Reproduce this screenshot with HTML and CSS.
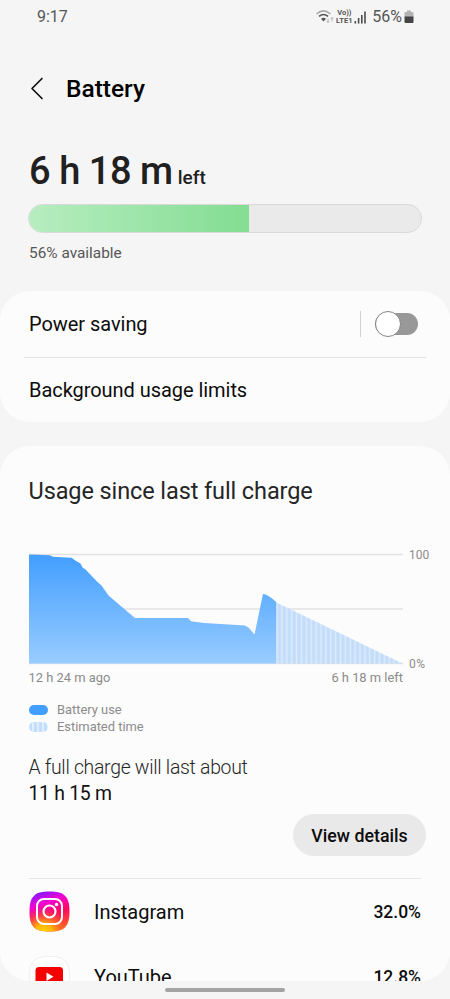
FILE: index.html
```html
<!DOCTYPE html>
<html lang="en">
<head>
    <meta charset="UTF-8">
    <meta name="viewport" content="width=device-width, initial-scale=1.0">
    <title>Battery</title>
    <link rel="stylesheet" href="styles.css">
</head>
<body>
    <div class="status-bar">
        <span class="clock">9:17</span>
        <div class="status-icons">
            <svg class="wifi" width="18" height="16" viewBox="0 0 18 16" fill="none">
                <path d="M0.500 5Q7.500 -1.200 14.500 5" stroke="#aaa" stroke-width="1.500"/>
                <path d="M3 7.400Q7.500 3.500 12 7.400" stroke="#555" stroke-width="1.500"/>
                <path d="M5 9.700Q7.500 7.600 10 9.700L7.500 12.500Z" fill="#555"/>
                <path d="M12 9.500v4M10.700 12.200l1.300 1.300 1.300-1.300M16 12.500V8.500M14.700 9.800l1.300-1.300 1.300 1.300" stroke="#aaa" stroke-width="0.900"/>
            </svg>
            <div class="volte"><span>Vo))</span><span>LTE1</span></div>
            <svg class="signal" width="13" height="13" viewBox="0 0 13 13" fill="#4c4c4c">
                <rect x="0.500" y="10" width="1.600" height="2.500"/>
                <rect x="3.800" y="7" width="1.600" height="5.500"/>
                <rect x="7" y="4" width="1.600" height="8.500"/>
                <rect x="10.200" y="0.500" width="1.600" height="12"/>
            </svg>
            <span class="level">56%</span>
            <svg width="10" height="14" viewBox="0 0 10 14">
                <path d="M3 0.500h4v1.500h1.500q1 0 1 1V7h-9V3q0-1 1-1H3Z" fill="#b4b4b4"/>
                <path d="M0.500 6.500h9V12q0 1-1 1h-7q-1 0-1-1Z" fill="#454545"/>
            </svg>
        </div>
    </div>

    <header class="header">
        <svg width="16" height="24" viewBox="0 0 16 24" fill="none" stroke="#111" stroke-width="1.700" stroke-linecap="round" stroke-linejoin="round">
            <path d="M13 1.500L3 11.500L13 21.500"/>
        </svg>
        <h1>Battery</h1>
    </header>

    <section class="summary">
        <div class="time-left"><strong>6 h 18 m</strong><span>left</span></div>
        <div class="meter"><div class="meter-fill" style="width: 56%"></div></div>
        <p class="available">56% available</p>
    </section>

    <section class="card settings">
        <div class="setting">
            <span class="power">Power saving</span>
            <div class="switch-wrap">
                <div class="switch"><div class="knob"></div></div>
            </div>
        </div>
        <div class="setting">
            <span class="limits">Background usage limits</span>
        </div>
    </section>

    <section class="card usage">
        <h2>Usage since last full charge</h2>
        <div class="chart">
            <svg width="375" height="112" viewBox="0 0 375 112">
                <defs>
                    <linearGradient id="use" x1="0" y1="1" x2="0" y2="110" gradientUnits="userSpaceOnUse">
                        <stop offset="0" stop-color="#429eff"/>
                        <stop offset="1" stop-color="#99ccff"/>
                    </linearGradient>
                    <pattern id="stripes" x="247.500" y="0" width="4.880" height="112" patternUnits="userSpaceOnUse">
                        <rect width="4.880" height="112" fill="#dcebfc"/>
                        <rect x="1.400" width="3.200" height="112" fill="#c2dcfa"/>
                    </pattern>
                </defs>
                <path d="M0 1.500H374M0 56H374M0 110.500H374" stroke="#e1e1e1" stroke-width="1.300"/>
                <path d="M0 1.500L21 2.300L24 3.700L42.500 4.700L47 8L51.500 10.500L53.500 14.500L56.500 16.500L68.500 29L72.500 32.500L79.500 42.500L96.500 57L106 65H159L162 68.300L175 70L216 72.500L220 75L225.500 81.500L234 41Q239 41 247.500 49.500V110.500H0Z" fill="url(#use)"/>
                <path d="M247.500 49.500L373.500 110.500H247.500Z" fill="url(#stripes)"/>
            </svg>
            <div class="y-labels"><span>100</span><span class="zero">0%</span></div>
        </div>
        <div class="x-labels"><span>12 h 24 m ago</span><span>6 h 18 m left</span></div>
        <div class="legend">
            <div class="legend-row"><i class="swatch"></i><span>Battery use</span></div>
            <div class="legend-row"><i class="swatch striped"></i><span>Estimated time</span></div>
        </div>
        <p class="forecast">A full charge will last about<strong>11 h 15 m</strong></p>
        <button class="details">View details</button>

        <div class="apps">
            <div class="app">
                <svg width="42" height="42" viewBox="0 0 42 42">
                    <defs>
                        <linearGradient id="igBase" x1="0.200" y1="0" x2="0.550" y2="1">
                            <stop offset="0" stop-color="#7a18ff"/>
                            <stop offset="0.300" stop-color="#ee06d5"/>
                            <stop offset="0.600" stop-color="#ff0864"/>
                            <stop offset="1" stop-color="#ff5b20"/>
                        </linearGradient>
                        <radialGradient id="igGlow" cx="0.350" cy="1.050" r="0.650">
                            <stop offset="0" stop-color="#ffda00"/>
                            <stop offset="0.350" stop-color="#ffb60c"/>
                            <stop offset="1" stop-color="#ff4b32" stop-opacity="0"/>
                        </radialGradient>
                    </defs>
                    <path d="M20.500 0.500C35.500 0.500 40.500 5.500 40.500 20.500S35.500 40.500 20.500 40.500S0.500 35.500 0.500 20.500S5.500 0.500 20.500 0.500Z" fill="url(#igBase)"/>
                    <path d="M20.500 0.500C35.500 0.500 40.500 5.500 40.500 20.500S35.500 40.500 20.500 40.500S0.500 35.500 0.500 20.500S5.500 0.500 20.500 0.500Z" fill="url(#igGlow)"/>
                    <rect x="8" y="8" width="25" height="25" rx="7" fill="none" stroke="#fff" stroke-width="2"/>
                    <circle cx="20.500" cy="20.500" r="6" fill="none" stroke="#fff" stroke-width="2.200"/>
                    <circle cx="27.500" cy="13.500" r="1.700" fill="#fff"/>
                </svg>
                <span class="name">Instagram</span>
                <span class="percent">32.0%</span>
            </div>
            <div class="app">
                <svg width="42" height="42" viewBox="0 0 42 42">
                    <path d="M20.500 0.500C35.500 0.500 40.500 5.500 40.500 20.500S35.500 40.500 20.500 40.500S0.500 35.500 0.500 20.500S5.500 0.500 20.500 0.500Z" fill="#fff" stroke="#eee"/>
                    <rect x="6.500" y="11" width="27.500" height="19.500" rx="3.500" fill="#f50000"/>
                    <path d="M17.500 16.500L24.500 20.700L17.500 24.900Z" fill="#fff"/>
                </svg>
                <span class="name">YouTube</span>
                <span class="percent">12.8%</span>
            </div>
        </div>
    </section>
    <div class="nav-handle"></div>
</body>
</html>
```
FILE: styles.css
```css
* {
    box-sizing: border-box;
}
body {
    margin: 0;
    height: 999px;
    overflow: hidden;
    background-color: #f5f5f5;
    color: #0c0c0c;
    font-family: Roboto, sans-serif;
}
h1, h2, p {
    margin: 0;
    font-weight: 400;
}
svg {
    display: block;
    flex-shrink: 0;
}
.status-bar {
    display: flex;
    justify-content: space-between;
    height: 34px;
    padding: 0 36px 0 37px;
    line-height: 34px;
    font-size: 16px;
    color: #555;
}
.status-icons {
    display: flex;
    align-items: center;
}
.wifi {
    margin-right: 1px;
}
.volte {
    display: flex;
    flex-direction: column;
    align-items: center;
    width: 18px;
    margin-right: 1px;
    font-size: 7.5px;
    font-weight: 700;
    line-height: 8px;
}
.signal {
    margin-right: 5px;
}
.level {
    margin-right: 2px;
}
.header {
    display: flex;
    align-items: center;
    height: 110px;
    padding-left: 29px;
}
.header h1 {
    margin-left: 21px;
    padding-bottom: 2px;
    font-size: 24.5px;
    font-weight: 500;
    color: #000;
}
.summary {
    height: 147px;
    padding: 0 28px;
}
.time-left {
    display: flex;
    align-items: baseline;
    height: 60px;
    padding-left: 1px;
    line-height: 54px;
    color: #202020;
}
.time-left strong {
    font-size: 38px;
    font-weight: 500;
    letter-spacing: -0.45px;
}
.time-left span {
    margin-left: 5px;
    font-size: 19px;
    font-weight: 500;
}
.meter {
    height: 29px;
    border: 1px solid #d9d9d9;
    border-radius: 15px;
    background-color: #eaeaea;
    overflow: hidden;
}
.meter-fill {
    height: 100%;
    background: linear-gradient(to right, #b7edc0, #83dd92);
}
.available {
    margin: 10px 0 0 1px;
    font-size: 15.4px;
    line-height: 20px;
    color: #555;
}
.card {
    border-radius: 30px;
    background-color: #fcfcfc;
}
.settings {
    height: 131px;
    padding: 0 24px;
}
.setting {
    display: flex;
    justify-content: space-between;
    align-items: center;
    height: 64px;
    padding: 0 8px 0 5px;
    font-size: 20px;
    letter-spacing: -0.05px;
}
.setting:first-child {
    height: 67px;
    border-bottom: 1px solid #e2e2e2;
}
.switch-wrap {
    display: flex;
    align-items: center;
    height: 26px;
    padding-left: 14px;
    border-left: 1px solid #d0d0d0;
}
.switch {
    display: flex;
    align-items: center;
    width: 43px;
    height: 22px;
    border-radius: 11px;
    background-color: #989898;
}
.knob {
    flex-shrink: 0;
    width: 26px;
    height: 26px;
    border: 1px solid #858585;
    border-radius: 50%;
    background-color: #fff;
}
.usage {
    height: 535px;
    margin-top: 24px;
    padding: 30px 24px 0 28.5px;
    overflow: hidden;
}
.usage h2 {
    height: 77px;
    font-size: 23.5px;
    letter-spacing: -0.1px;
    line-height: 30px;
    color: #252525;
}
.chart {
    display: flex;
    height: 112px;
}
.y-labels {
    display: flex;
    flex-direction: column;
    justify-content: space-between;
    margin: -5px 0 -6px 5.5px;
    font-size: 12px;
    line-height: 14px;
    color: #8b8b8b;
}
.zero {
    letter-spacing: 0.6px;
}
.x-labels {
    display: flex;
    justify-content: space-between;
    width: 374.5px;
    margin-top: 5px;
    font-size: 12.9px;
    line-height: 16px;
    color: #8b8b8b;
}
.legend {
    margin-top: 15px;
    font-size: 12.9px;
    line-height: 18px;
    color: #8b8b8b;
}
.legend-row {
    display: flex;
    align-items: center;
    height: 17.5px;
}
.swatch {
    width: 19px;
    height: 10px;
    margin-right: 9.5px;
    border-radius: 5px;
    background-color: #429eff;
}
.swatch.striped {
    background: repeating-linear-gradient(to right, #c2defc 0 3px, #e0eefc 3px 5px);
}
.forecast {
    margin-top: 19px;
    font-size: 19.4px;
    font-weight: 300;
    letter-spacing: -0.28px;
    line-height: 26px;
    color: #252525;
}
.forecast strong {
    display: block;
    font-weight: 400;
    color: #111;
}
.details {
    display: block;
    width: 133px;
    height: 42px;
    margin: 7px 0 0 auto;
    padding: 0;
    border: none;
    border-radius: 21px;
    background-color: #e9e9e9;
    color: #0c0c0c;
    font-family: inherit;
    font-size: 17.8px;
    font-weight: 500;
}
.apps {
    margin: 22px 5px 0 0;
    border-top: 1px solid #e5e5e5;
}
.app {
    display: flex;
    align-items: center;
    height: 65px;
}
.name {
    margin-left: 23.5px;
    padding-top: 1px;
    font-size: 20px;
}
.percent {
    margin-left: auto;
    padding-top: 1px;
    font-size: 17.5px;
    font-weight: 500;
}
.nav-handle {
    width: 120px;
    height: 4px;
    margin: 7px auto 0;
    border-radius: 2px;
    background-color: #a3a3a3;
}
```
